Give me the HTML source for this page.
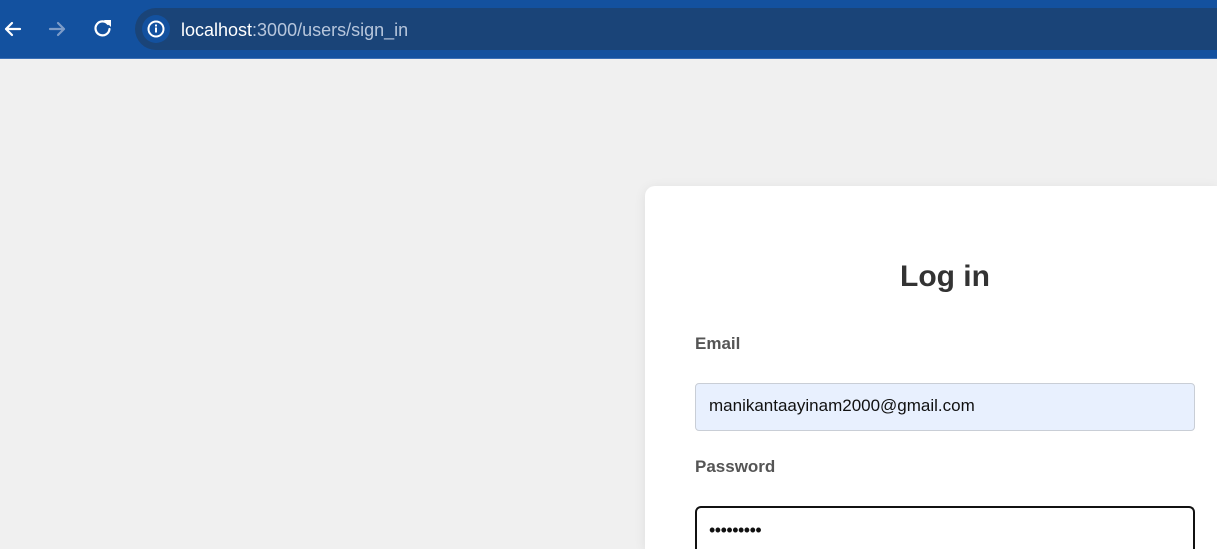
<!DOCTYPE html>
<html style="margin:0;width:1217px;height:549px;overflow:hidden"><head><meta charset="utf-8"><style>
body{margin:0;width:1217px;height:549px;overflow:hidden;background:#f0f0f0;font-family:"Liberation Sans",Arial,sans-serif;position:relative}
.bar{position:absolute;left:0;top:0;width:1217px;height:58px;background:#13519f;border-bottom:1px solid #3b6fb5}
.pill{position:absolute;left:135px;top:8px;width:1082px;height:42px;border-radius:21px 0 0 21px;background:#1a4478}
.info{position:absolute;left:142px;top:15px;width:28px;height:28px;border-radius:50%;background:#13519f}
.url{position:absolute;left:181px;top:20px;font-size:18px;color:#fff}
.url span{color:#b7c6dc}
.card{position:absolute;left:645px;top:186px;width:572px;height:363px;background:#fff;border-radius:10px 0 0 0;box-shadow:0 2px 12px rgba(0,0,0,.08)}
h1{position:absolute;left:645px;top:260px;width:600px;margin:0;text-align:center;font-size:30px;color:#333;font-weight:bold}
.lbl{position:absolute;left:695px;font-size:17px;font-weight:bold;color:#555}
.in{position:absolute;left:695px;width:500px;height:46px;border-radius:4px;box-sizing:border-box;font-size:17px;padding-left:13px;line-height:44px;color:#111}
</style></head><body>
<div class="bar">
<svg style="position:absolute;left:0;top:0" width="130" height="58">
<g fill="none" stroke="#fff" stroke-width="2.2" stroke-linecap="round" stroke-linejoin="round">
<path d="M20 29H6M12 23l-6 6 6 6"/>
<path d="M50 29h14M58 23l6 6-6 6" stroke="#7d9cc8"/>
<path d="M108 24a7 7 0 1 0 1.5 5"/>
</g>
<path d="M104 20h7v7z" fill="#fff"/>
</svg>
</div>
<div class="pill"></div>
<div class="info"><svg width="28" height="28"><circle cx="14" cy="14" r="7.5" fill="none" stroke="#fff" stroke-width="2"/><rect x="13" y="12.5" width="2" height="5" fill="#fff"/><rect x="13" y="9.5" width="2" height="2" fill="#fff"/></svg></div>
<div class="url">localhost<span>:3000/users/sign_in</span></div>
<div class="card"></div>
<h1>Log in</h1>
<div class="lbl" style="top:334px">Email</div>
<div class="in" style="top:383px;height:48px;background:#e8f0fe;border:1px solid #c9ced6">manikantaayinam2000@gmail.com</div>
<div class="lbl" style="top:457px">Password</div>
<div class="in" style="top:506px;height:43px;border:2px solid #111;border-bottom:none;border-radius:6px 6px 0 0;padding-left:12px;line-height:44px;font-size:18px;letter-spacing:-0.5px">•••••••••</div>
</body></html>
